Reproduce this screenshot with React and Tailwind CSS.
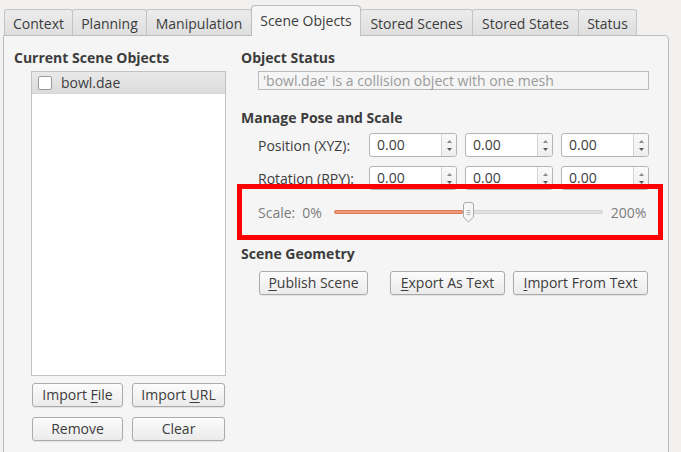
import { useState } from 'react'

const font = { fontFamily: '"Open Sans", "DejaVu Sans", sans-serif' }

const tabs = [
  { label: 'Context', w: 'w-[69px]' },
  { label: 'Planning', w: 'w-[75px]' },
  { label: 'Manipulation', w: 'w-[106px]' },
  { label: 'Scene Objects', w: 'w-[110px]', active: true },
  { label: 'Stored Scenes', w: 'w-[113px]' },
  { label: 'Stored States', w: 'w-[107px]' },
  { label: 'Status', w: 'w-[59px]' },
]

// label with an underlined mnemonic letter
function Mn({ text, at }) {
  if (at == null) return text
  return (
    <>
      {text.slice(0, at)}
      <span className="underline underline-offset-2">{text[at]}</span>
      {text.slice(at + 1)}
    </>
  )
}

function Btn({ text, at, className = '' }) {
  return (
    <button
      className={`h-[24px] rounded-[3px] border border-[#ababab] bg-gradient-to-b from-[#fcfcfc] to-[#ebebeb]
                  text-[14px] leading-none text-[#3c3c3c] shadow-[0_1px_1px_rgba(0,0,0,0.08)] ${className}`}
    >
      <Mn text={text} at={at} />
    </button>
  )
}

function SpinBox() {
  return (
    <div className="flex h-[24px] w-[88px] rounded-[3px] border border-[#b4b4b4] bg-white overflow-hidden">
      <div className="flex-1 pl-[7px] text-[14px] leading-[22px] text-[#3c3c3c]">0.00</div>
      <div className="w-[15px] border-l border-[#d4d4d4] bg-gradient-to-b from-[#fafafa] to-[#eeeeee] flex flex-col items-center justify-center gap-[5px]">
        <svg width="5" height="3" viewBox="0 0 5 3"><path d="M0 3 L2.5 0 L5 3 Z" fill="#8a8a8a" /></svg>
        <svg width="5" height="3" viewBox="0 0 5 3"><path d="M0 0 L2.5 3 L5 0 Z" fill="#5a5a5a" /></svg>
      </div>
    </div>
  )
}

export default function App() {
  const [scale] = useState(48)

  return (
    <div style={font} className="relative w-[681px] h-[452px] overflow-hidden bg-[#f2f1f0] text-[#3c3c3c]">
      {/* Tab bar */}
      <div className="flex items-end h-[36px] pl-[4px] -mb-px relative z-10">
        {tabs.map((t) =>
          t.active ? (
            <div
              key={t.label}
              className={`${t.w} h-[31px] -mr-px rounded-t-[4px] border border-b-0 border-[#bcbcbc] bg-[#f5f5f5]
                          flex items-center justify-center text-[14px] pb-[2px]`}
            >
              {t.label}
            </div>
          ) : (
            <div
              key={t.label}
              className={`${t.w} h-[26px] mb-px -mr-px rounded-t-[3px] border border-b-0 border-[#c4c4c4]
                          bg-gradient-to-b from-[#ececec] to-[#dedede] flex items-center justify-center text-[14px] pt-[1px]`}
            >
              {t.label}
            </div>
          )
        )}
      </div>

      {/* Panel */}
      <div className="ml-[3px] w-[666px] h-[430px] border border-[#bcbcbc] rounded-tr-[4px] bg-[#f5f5f5] flex">
        {/* Left column */}
        <div className="w-[227px] shrink-0 flex flex-col">
          <div className="pl-[10px] pt-[12px] text-[14px] font-bold leading-[20px]">Current Scene Objects</div>
          <div className="ml-[27px] mt-[3px] w-[195px] h-[305px] border border-[#c2c2c2] bg-white">
            <div className="h-[22px] flex items-center bg-gradient-to-b from-[#e9e9e9] to-[#dcdcdc] border-b border-[#d6d6d6]">
              <div className="ml-[6px] w-[14px] h-[14px] rounded-[2px] border border-[#9a9a9a] bg-white" />
              <span className="ml-[9px] text-[14px]">bowl.dae</span>
            </div>
          </div>
          <div className="ml-[28px] mt-[7px] flex gap-[9px]">
            <Btn text="Import File" at={7} className="w-[91px]" />
            <Btn text="Import URL" at={7} className="w-[93px]" />
          </div>
          <div className="ml-[28px] mt-[10px] flex gap-[9px]">
            <Btn text="Remove" className="w-[91px]" />
            <Btn text="Clear" className="w-[93px]" />
          </div>
        </div>

        {/* Right column */}
        <div className="flex-1 flex flex-col pl-[10px]">
          <div className="pt-[12px] text-[14px] font-bold leading-[20px]">Object Status</div>
          <div className="ml-[17px] mt-[3px] w-[391px] h-[19px] border border-[#bababa] pl-[4px] text-[14px] leading-[17px] text-[#9a9a9a]">
            'bowl.dae' is a collision object with one mesh
          </div>

          <div className="mt-[18px] text-[14px] font-bold leading-[20px]">Manage Pose and Scale</div>
          <div className="ml-[17px] mt-[5px] flex items-center">
            <span className="w-[111px] text-[14px]">Position (XYZ):</span>
            <div className="flex gap-[8px]">
              <SpinBox />
              <SpinBox />
              <SpinBox />
            </div>
          </div>
          <div className="ml-[17px] mt-[9px] flex items-center">
            <span className="w-[111px] text-[14px]">Rotation (RPY):</span>
            <div className="flex gap-[8px]">
              <SpinBox />
              <SpinBox />
              <SpinBox />
            </div>
          </div>

          {/* Scale slider */}
          <div className="ml-[17px] mt-[12px] h-[20px] flex items-center text-[14px] text-[#7d7d7d]">
            <span>Scale:</span>
            <span className="ml-[7px]">0%</span>
            <div className="relative ml-[12px] w-[269px] h-[20px]">
              <div className="absolute left-0 right-0 top-[8px] h-[4px] rounded-full bg-[#e2e2e2] border border-[#d2d2d2]" />
              <div
                className="absolute left-0 top-[8px] h-[4px] rounded-full bg-[#ee9a76] border border-[#d97c55]"
                style={{ width: `${scale}%` }}
              />
              <svg className="absolute top-0 left-[128px]" width="13" height="21" viewBox="0 0 13 21">
                <path d="M1.5 3 Q1.5 0.5 4 0.5 L9 0.5 Q11.5 0.5 11.5 3 L11.5 15 L6.5 20 L1.5 15 Z" fill="#f7f7f7" stroke="#a9a9a9" />
                <path d="M4.5 8.5 H8.5 M4.5 10.5 H8.5 M4.5 12.5 H8.5" stroke="#b5b5b5" strokeWidth="1" />
              </svg>
            </div>
            <span className="ml-[8px]">200%</span>
          </div>

          <div className="mt-[22px] text-[14px] font-bold leading-[20px]">Scene Geometry</div>
          <div className="ml-[18px] mt-[7px] flex">
            <Btn text="Publish Scene" at={0} className="w-[109px]" />
            <Btn text="Export As Text" at={0} className="ml-[22px] w-[115px]" />
            <Btn text="Import From Text" at={0} className="ml-[8px] w-[135px]" />
          </div>
        </div>
      </div>

      {/* red annotation box */}
      <div className="absolute left-[237px] top-[184px] w-[426px] h-[56px] border-[5px] border-[#ff0000]" />
    </div>
  )
}
